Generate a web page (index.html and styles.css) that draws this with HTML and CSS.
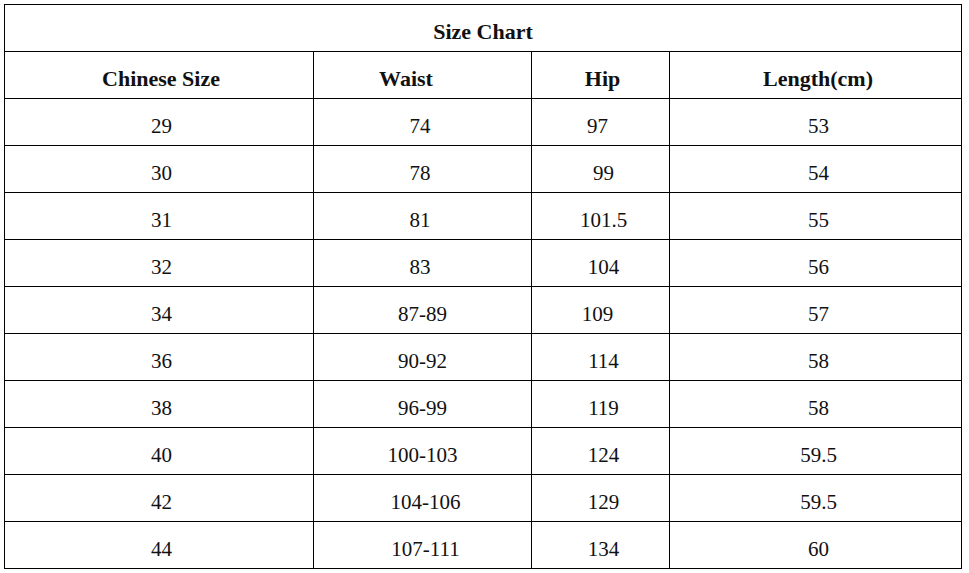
FILE: index.html
```html
<!DOCTYPE html>
<html>
<head>
<meta charset="utf-8">
<link rel="stylesheet" href="styles.css">
</head>
<body>
<div class="chart">
  <div class="cell title">Size Chart</div>
  <div class="cell head c1">Chinese Size</div>
  <div class="cell head c2">Waist</div>
  <div class="cell head c3">Hip</div>
  <div class="cell head c4">Length(cm)</div>

  <div class="cell c1">29</div><div class="cell c2 sl">74</div><div class="cell c3 sl">97</div><div class="cell c4">53</div>
  <div class="cell c1">30</div><div class="cell c2 sl">78</div><div class="cell c3">99</div><div class="cell c4">54</div>
  <div class="cell c1">31</div><div class="cell c2 sl">81</div><div class="cell c3">101.5</div><div class="cell c4">55</div>
  <div class="cell c1">32</div><div class="cell c2 sl">83</div><div class="cell c3">104</div><div class="cell c4">56</div>
  <div class="cell c1">34</div><div class="cell c2">87-89</div><div class="cell c3 sl">109</div><div class="cell c4">57</div>
  <div class="cell c1">36</div><div class="cell c2">90-92</div><div class="cell c3">114</div><div class="cell c4">58</div>
  <div class="cell c1">38</div><div class="cell c2">96-99</div><div class="cell c3">119</div><div class="cell c4">58</div>
  <div class="cell c1">40</div><div class="cell c2">100-103</div><div class="cell c3">124</div><div class="cell c4">59.5</div>
  <div class="cell c1">42</div><div class="cell c2 sr">104-106</div><div class="cell c3">129</div><div class="cell c4">59.5</div>
  <div class="cell c1">44</div><div class="cell c2 sr">107-111</div><div class="cell c3">134</div><div class="cell c4">60</div>
</div>
</body>
</html>
```

FILE: styles.css
```css
html, body {
  margin: 0;
  padding: 0;
  background: #ffffff;
}

body {
  padding: 4px 0 0 4px;
}

.chart {
  display: grid;
  grid-template-columns: 308px 217px 137px 291px;
  grid-auto-rows: 46px;
  gap: 1px;
  padding: 1px;
  background: #000000;
  width: max-content;
  font-family: "Liberation Serif", "Times New Roman", serif;
  color: #111111;
}

.cell {
  background: #ffffff;
  display: flex;
  align-items: center;
  justify-content: center;
  font-size: 21px;
  padding-top: 8px;
  box-sizing: border-box;
}

.title {
  grid-column: 1 / -1;
  font-weight: bold;
  font-size: 22px;
  padding-left: 0;
}

.head {
  font-weight: bold;
  font-size: 22px;
}

.c1 { padding-left: 5px; }
.c2 { padding-left: 0; }
.c3 { padding-left: 6px; }
.c4 { padding-left: 6px; }

.head.c1 { padding-left: 4px; }
.head.c2 { padding-left: 0; padding-right: 33px; }
.head.c3 { padding-left: 4px; }
.head.c4 { padding-left: 5px; }

.c2.sl { padding-left: 0; padding-right: 5px; }
.c2.sr { padding-left: 6px; }
.c3.sl { padding-left: 0; padding-right: 6px; }
```
